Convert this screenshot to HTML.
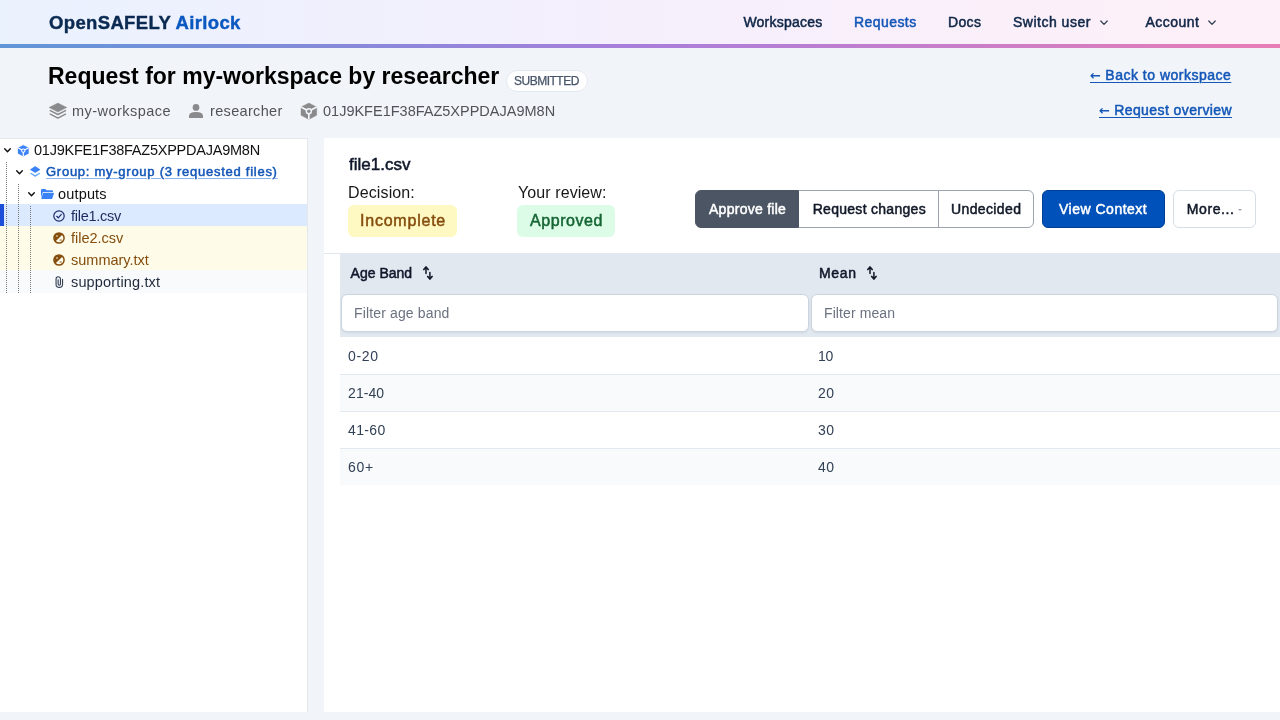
<!DOCTYPE html>
<html lang="en">
<head>
<meta charset="utf-8">
<title>Request for my-workspace by researcher | OpenSAFELY Airlock</title>
<style>
*{box-sizing:border-box;margin:0;padding:0}
html,body{width:1280px;height:720px;overflow:hidden}
body{background:#f1f5f9;font-family:"Liberation Sans",sans-serif;color:#0f172a;position:relative}
.abs{position:absolute;white-space:nowrap;line-height:1}
svg{position:absolute;display:block;overflow:visible}
/* header */
#hdr{position:absolute;left:0;top:0;width:1280px;height:44px;background:linear-gradient(90deg,#eaf2fe 0%,#f5effc 50%,#fef0f8 100%)}
#hdrline{position:absolute;left:0;top:44px;width:1280px;height:4px;background:linear-gradient(90deg,#6096d6 0%,#a97edb 50%,#e87db6 100%)}
.nav{font-weight:normal;-webkit-text-stroke:0.5px;font-size:14px;color:#0f2647}
.ar{font-family:"DejaVu Sans","Liberation Sans",sans-serif;font-weight:bold;-webkit-text-stroke:0;font-size:13px;letter-spacing:0}
.meta{font-size:14.5px;color:#52525b}
.lnk{font-size:14px;font-weight:normal;-webkit-text-stroke:0.5px;color:#1457b8;text-decoration:underline;text-underline-offset:2px;text-decoration-thickness:1px}
/* panels */
#tree{position:absolute;left:0;top:138px;width:308px;height:574px;background:#fff;border-right:1px solid #e5e7eb;border-top:1px solid #e5e7eb}
#main{position:absolute;left:324px;top:138px;width:956px;height:574px;background:#fff}
.row{position:absolute;left:0;width:307px;height:22px}
.dot{position:absolute;width:0;border-left:1px dotted #787878}
.tl{font-size:14.5px;color:#111}
.btn{height:38px}
.bt{font-size:14px;font-weight:normal;-webkit-text-stroke:0.5px}
.th{font-size:14px;font-weight:normal;-webkit-text-stroke:0.5px;color:#0f172a}
.ph{font-size:14px;color:#6b7280}
.inp{position:absolute;top:156px;height:38px;background:#fff;border:1px solid #cbd5e1;border-radius:6px;box-shadow:0 1px 2px rgba(15,23,42,.08)}
.tr{position:absolute;left:16px;width:940px;height:37px;border-top:1px solid #e2e8f0}
.td{font-size:14px;color:#334155}
</style>
</head>
<body>
<div id="app" style="position:absolute;left:0;top:0;width:1280px;height:720px;will-change:transform">
<div id="hdr"></div>
<div id="hdrline"></div>
<div class="abs" id="logo" style="-webkit-text-stroke:0.4px;left:49px;top:14px;font-size:18.5px;font-weight:bold;color:#0b2a52;letter-spacing:0.353px">OpenSAFELY <span style="color:#0a58c0">Airlock</span></div>
<div class="abs nav" id="n1" style="left:743.4px;top:15px;letter-spacing:0.221px">Workspaces</div>
<div class="abs nav" id="n2" style="left:854px;top:15px;color:#1457b8;letter-spacing:0.429px">Requests</div>
<div class="abs nav" id="n3" style="left:948px;top:15px;letter-spacing:0.332px">Docs</div>
<div class="abs nav" id="n4" style="left:1013px;top:15px;letter-spacing:0.5px">Switch user</div>
<svg style="left:1100px;top:19.5px" width="8" height="6" viewBox="0 0 8 6"><path d="M0.8 1 L4 4.4 L7.2 1" fill="none" stroke="#334155" stroke-width="1.3" stroke-linecap="round" stroke-linejoin="round"/></svg>
<div class="abs nav" id="n5" style="left:1145.4px;top:15px;letter-spacing:0.499px">Account</div>
<svg style="left:1208px;top:19.5px" width="8" height="6" viewBox="0 0 8 6"><path d="M0.8 1 L4 4.4 L7.2 1" fill="none" stroke="#334155" stroke-width="1.3" stroke-linecap="round" stroke-linejoin="round"/></svg>

<div class="abs" id="title" style="left:48px;top:65px;font-size:23px;font-weight:bold;color:#000">Request for my-workspace by researcher</div>
<div class="abs" style="left:505.5px;top:70px;width:82.5px;height:22px;border-radius:11px;background:#fff;border:1px solid #e2e8f0"></div>
<div class="abs" id="pill" style="left:514px;top:75px;font-size:12px;color:#475569;letter-spacing:-0.5px;-webkit-text-stroke:0.25px">SUBMITTED</div>

<svg style="left:49px;top:102.9px" width="17.8" height="16.2" viewBox="0 0 17.8 16.2"><path d="M8.9 0L17.8 4.5L8.9 9L0 4.5Z" fill="#8a8a8c" stroke="#8a8a8c" stroke-width="0.4" stroke-linejoin="round"/><path d="M1.3 7.6L8.9 11.5L16.5 7.6M1.3 11.2L8.9 15.1L16.5 11.2" fill="none" stroke="#8a8a8c" stroke-width="1.5" stroke-linecap="round" stroke-linejoin="round"/></svg>
<div class="abs meta" id="m1" style="left:72px;top:104px;letter-spacing:0.457px">my-workspace</div>
<svg style="left:189px;top:104px" width="14" height="14" viewBox="0 0 14 14" fill="#8a8a8c"><circle cx="7" cy="3.45" r="3.35"/><path d="M0 13.9V12Q0 7.9 7 7.9Q14 7.9 14 12V13.9Z"/></svg>
<div class="abs meta" id="m2" style="left:210px;top:104px;letter-spacing:0.331px">researcher</div>
<svg style="left:301px;top:102.7px" width="15.7" height="16.4" viewBox="0 0 15.7 16.4"><path d="M7.85 0L15.7 4L15.7 12.3L7.85 16.4L0 12.3L0 4Z" fill="#8a8a8c" stroke="#8a8a8c" stroke-width="0.4" stroke-linejoin="round"/><path d="M7.85 8.2L0 4M7.85 8.2L15.7 4M7.85 8.2V16.4" stroke="#f1f5f9" stroke-width="1.7" fill="none"/><circle cx="7.85" cy="8.2" r="3.2" fill="#f1f5f9"/><circle cx="7.85" cy="8.2" r="1.7" fill="#8a8a8c"/></svg>
<div class="abs meta" id="m3" style="left:323px;top:104px;letter-spacing:0px">01J9KFE1F38FAZ5XPPDAJA9M8N</div>
<div class="abs lnk" id="l1" style="left:1090px;top:68px;letter-spacing:0.5px"><span class="ar">←</span> Back to workspace</div>
<div class="abs lnk" id="l2" style="left:1099px;top:103px;letter-spacing:0.411px"><span class="ar">←</span> Request overview</div>

<div id="tree">
  <div class="row" style="top:65px;background:#dbeafe;border-left:4px solid #1d4ed8"></div>
  <div class="row" style="top:87px;background:#fefce8"></div>
  <div class="row" style="top:109px;background:#fefce8"></div>
  <div class="row" style="top:131px;height:23px;background:#f8fafc"></div>
  <div class="dot" style="left:6px;top:23px;height:131px"></div>
  <div class="dot" style="left:18px;top:45px;height:109px"></div>
  <div class="dot" style="left:30px;top:67px;height:87px"></div>
  <!-- chevrons -->
  <svg style="left:3.5px;top:8.7px" width="7" height="5" viewBox="0 0 7 5"><path d="M0.7 0.8 L3.5 3.8 L6.3 0.8" fill="none" stroke="#111" stroke-width="1.4" stroke-linecap="round" stroke-linejoin="round"/></svg>
  <svg style="left:15.5px;top:30.7px" width="7" height="5" viewBox="0 0 7 5"><path d="M0.7 0.8 L3.5 3.8 L6.3 0.8" fill="none" stroke="#111" stroke-width="1.4" stroke-linecap="round" stroke-linejoin="round"/></svg>
  <svg style="left:27.5px;top:52.7px" width="7" height="5" viewBox="0 0 7 5"><path d="M0.7 0.8 L3.5 3.8 L6.3 0.8" fill="none" stroke="#111" stroke-width="1.4" stroke-linecap="round" stroke-linejoin="round"/></svg>
  <!-- root cube -->
  <svg style="left:17.7px;top:5.55px" width="10.6" height="11.4" viewBox="0 0 15.7 16.4"><path d="M7.85 0L15.7 4L15.7 12.3L7.85 16.4L0 12.3L0 4Z" fill="#3b82f6" stroke="#3b82f6" stroke-width="0.4" stroke-linejoin="round"/><path d="M7.85 8.2L0 4M7.85 8.2L15.7 4M7.85 8.2V16.4" stroke="#ffffff" stroke-width="1.7" fill="none"/><circle cx="7.85" cy="8.2" r="3.2" fill="#ffffff"/><circle cx="7.85" cy="8.2" r="1.7" fill="#3b82f6"/></svg>
  <div class="abs tl" id="t1" style="left:34px;top:4px;letter-spacing:-0.24px">01J9KFE1F38FAZ5XPPDAJA9M8N</div>
  <!-- group layers -->
  <svg style="left:28.66px;top:25.95px" width="12.4" height="13" preserveAspectRatio="none" viewBox="0 0 20 20"><path fill="#60a5fa" d="m3.196 11.87-.825.483a.75.75 0 0 0 0 1.294l7.25 4.25a.75.75 0 0 0 .758 0l7.25-4.25a.75.75 0 0 0 0-1.294l-.825-.484-5.666 3.322a2.25 2.25 0 0 1-2.276 0L3.196 11.87Z"/><path fill="#3b82f6" d="M10.38 2.103a.75.75 0 0 0-.76 0l-7.25 4.25a.75.75 0 0 0 0 1.294l7.25 4.25a.75.75 0 0 0 .76 0l7.25-4.25a.75.75 0 0 0 0-1.294l-7.25-4.25Z"/></svg>
  <div class="abs tl" id="t2" style="left:46px;top:26px;font-size:13px;font-weight:normal;-webkit-text-stroke:0.5px;color:#1457b8;text-decoration:underline;text-underline-offset:2px;letter-spacing:0.736px;text-decoration-color:#8ab4f0">Group: my-group (3 requested files)</div>
  <!-- folder -->
  <svg style="left:40.9px;top:50px" width="13" height="10" viewBox="0 0 13 10"><path fill="#3b82f6" d="M0 0.9Q0 0 0.9 0H4.3L5.5 1.2H11.1Q12 1.2 12 2.1V3H2.7Q1.9 3 1.6 3.8L0 8.8Z"/><path fill="#3b82f6" d="M3.1 3.8H12.4Q13.2 3.8 12.9 4.6L11.3 9.4Q11.1 10 10.4 10H0.9Q0.2 10 0.4 9.3L1.9 4.6Q2.2 3.8 3.1 3.8Z"/></svg>
  <div class="abs tl" id="t3" style="left:58px;top:48px;letter-spacing:0.167px">outputs</div>
  <!-- file1 check circle -->
  <svg style="left:53px;top:71px" width="12" height="12" viewBox="0 0 12 12" fill="none" stroke="#1e2a6b" stroke-width="1.2" stroke-linecap="round" stroke-linejoin="round"><circle cx="6" cy="6" r="5.200"/><path d="M3.700 6.300 L5.300 7.800 L8.300 4.400"/></svg>
  <div class="abs tl" id="t4" style="left:71px;top:70px;color:#1e2a5e;letter-spacing:-0.255px">file1.csv</div>
  <!-- file2 -->
  <svg style="left:53px;top:93px" width="12" height="12" viewBox="0 0 12 12"><circle cx="6" cy="6" r="5.100" fill="#fefce8" stroke="#854d0e" stroke-width="1.500"/><path d="M9.600 2.400 A5.100 5.100 0 0 0 2.400 9.600 Z" fill="#854d0e"/><rect x="6.600" y="7.600" width="2.200" height="0.900" fill="#854d0e"/><circle cx="4" cy="4" r="0.800" fill="#fefce8"/></svg>
  <div class="abs tl" id="t5" style="left:71px;top:92px;color:#854d0e;letter-spacing:-0.005px">file2.csv</div>
  <svg style="left:53px;top:115px" width="12" height="12" viewBox="0 0 12 12"><circle cx="6" cy="6" r="5.100" fill="#fefce8" stroke="#854d0e" stroke-width="1.500"/><path d="M9.600 2.400 A5.100 5.100 0 0 0 2.400 9.600 Z" fill="#854d0e"/><rect x="6.600" y="7.600" width="2.200" height="0.900" fill="#854d0e"/><circle cx="4" cy="4" r="0.800" fill="#fefce8"/></svg>
  <div class="abs tl" id="t6" style="left:71px;top:114px;color:#854d0e">summary.txt</div>
  <!-- paperclip -->
  <svg style="left:54.9px;top:136.8px" width="8.6" height="12" viewBox="0 0 9 12.6" fill="none" stroke="#334155" stroke-width="1.2" stroke-linecap="round"><path d="M7.9 3.6V8.6A3.4 3.4 0 0 1 1.1 8.6V3.1A2.3 2.3 0 0 1 5.7 3.1V8.5A1.2 1.2 0 0 1 3.3 8.5V4"/></svg>
  <div class="abs tl" id="t7" style="left:71px;top:136px;color:#1e293b;letter-spacing:0.154px">supporting.txt</div>
</div>

<div id="main">
  <div class="abs" id="fn" style="left:25px;top:18px;font-size:17px;font-weight:normal;-webkit-text-stroke:0.5px;color:#0f172a;letter-spacing:-0.002px">file1.csv</div>
  <div class="abs" id="d1" style="left:24px;top:47px;font-size:16px;color:#18181b;letter-spacing:0.125px">Decision:</div>
  <div class="abs" id="d2" style="left:194px;top:47px;font-size:16px;color:#18181b;letter-spacing:0.091px">Your review:</div>
  <div class="abs" style="left:24px;top:67px;width:109px;height:32px;border-radius:6px;background:#fef9c3"></div>
  <div class="abs" id="b1" style="left:36px;top:75px;color:#854d0e;font-weight:normal;-webkit-text-stroke:0.5px;font-size:16px;letter-spacing:0.777px">Incomplete</div>
  <div class="abs" style="left:193px;top:67px;width:98px;height:32px;border-radius:6px;background:#dcfce7"></div>
  <div class="abs" id="b2" style="left:206px;top:75px;color:#166534;font-weight:normal;-webkit-text-stroke:0.5px;font-size:16px;letter-spacing:0.571px">Approved</div>

  <div class="abs btn" style="left:371px;top:52px;width:104px;background:#4b5563;border:1px solid #4b5563;border-radius:6px 0 0 6px"></div>
  <div class="abs bt" id="g1" style="left:385px;top:64px;color:#fff;letter-spacing:0.27px">Approve file</div>
  <div class="abs btn" style="left:475px;top:52px;width:140px;background:#fff;border:1px solid #9ca3af;border-left:none"></div>
  <div class="abs bt" id="g2" style="left:488.7px;top:64px;color:#111827;letter-spacing:0.286px">Request changes</div>
  <div class="abs btn" style="left:614px;top:52px;width:96px;background:#fff;border:1px solid #9ca3af;border-radius:0 6px 6px 0"></div>
  <div class="abs bt" id="g3" style="left:627px;top:64px;color:#111827;letter-spacing:0.375px">Undecided</div>
  <div class="abs btn" style="left:718px;top:52px;width:123px;background:#0051ba;border:1px solid #003f94;border-radius:6px"></div>
  <div class="abs bt" id="g4" style="left:735px;top:64px;color:#fff;letter-spacing:0.502px">View Context</div>
  <div class="abs btn" style="left:849px;top:52px;width:83px;background:#fff;border:1px solid #d7dde5;border-radius:6px"></div>
  <div class="abs bt" id="g5" style="left:862.8px;top:64px;color:#111827;letter-spacing:0.582px">More...</div>
  <svg style="left:914px;top:70.5px" width="4" height="2" viewBox="0 0 4 2"><path d="M0 0 H4 L2 2 Z" fill="#9ca3af"/></svg>

  <div style="position:absolute;left:0;top:115px;width:956px;height:1px;background:#e2e8f0"></div>
  <div id="thead" style="position:absolute;left:16px;top:115px;width:940px;height:85px;background:#e2e8f0;border-bottom:1px solid #c3cedb"></div>
  <div class="abs th" id="h1" style="left:26.6px;top:128px;letter-spacing:0px">Age Band</div>
  <svg style="left:98px;top:128px" width="12" height="14" viewBox="0 0 12 14" fill="none" stroke="#111827" stroke-linecap="round" stroke-linejoin="round"><path d="M4 1.2V7.6M7.9 6.4V12.8" stroke-width="1.5"/><path d="M1.8 3.5L4 1.2L6.2 3.5M5.7 10.5L7.9 12.8L10.1 10.5" stroke-width="1.7"/></svg>
  <div class="abs th" id="h2" style="left:495px;top:128px;letter-spacing:0.668px">Mean</div>
  <svg style="left:542.1px;top:128px" width="12" height="14" viewBox="0 0 12 14" fill="none" stroke="#111827" stroke-linecap="round" stroke-linejoin="round"><path d="M4 1.2V7.6M7.9 6.4V12.8" stroke-width="1.5"/><path d="M1.8 3.5L4 1.2L6.2 3.5M5.7 10.5L7.9 12.8L10.1 10.5" stroke-width="1.7"/></svg>
  <div class="inp" style="left:17px;width:468px"></div>
  <div class="inp" style="left:487px;width:467px"></div>
  <div class="abs ph" id="p1" style="left:30px;top:168px;letter-spacing:0.14px">Filter age band</div>
  <div class="abs ph" id="p2" style="left:500px;top:168px;letter-spacing:0.1px">Filter mean</div>

  <div class="tr" style="top:199px;border-top:none;background:#fff"></div>
  <div class="tr" style="top:236px;background:#f8fafc"></div>
  <div class="tr" style="top:273px;background:#fff"></div>
  <div class="tr" style="top:310px;background:#f8fafc"></div>
  <div class="abs td" id="r1a" style="left:24px;top:211px;letter-spacing:0.665px">0-20</div><div class="abs td" id="r1b" style="left:494px;top:211px;letter-spacing:-0.4px">10</div>
  <div class="abs td" id="r2a" style="left:24.1px;top:248px;letter-spacing:0.025px">21-40</div><div class="abs td" id="r2b" style="left:494px;top:248px;letter-spacing:0.4px">20</div>
  <div class="abs td" id="r3a" style="left:24.1px;top:285px;letter-spacing:0.325px">41-60</div><div class="abs td" id="r3b" style="left:494px;top:285px;letter-spacing:0.4px">30</div>
  <div class="abs td" id="r4a" style="left:24.1px;top:322px;letter-spacing:0.65px">60+</div><div class="abs td" id="r4b" style="left:494px;top:322px;letter-spacing:0.4px">40</div>
</div>
</div>
</body>
</html>
